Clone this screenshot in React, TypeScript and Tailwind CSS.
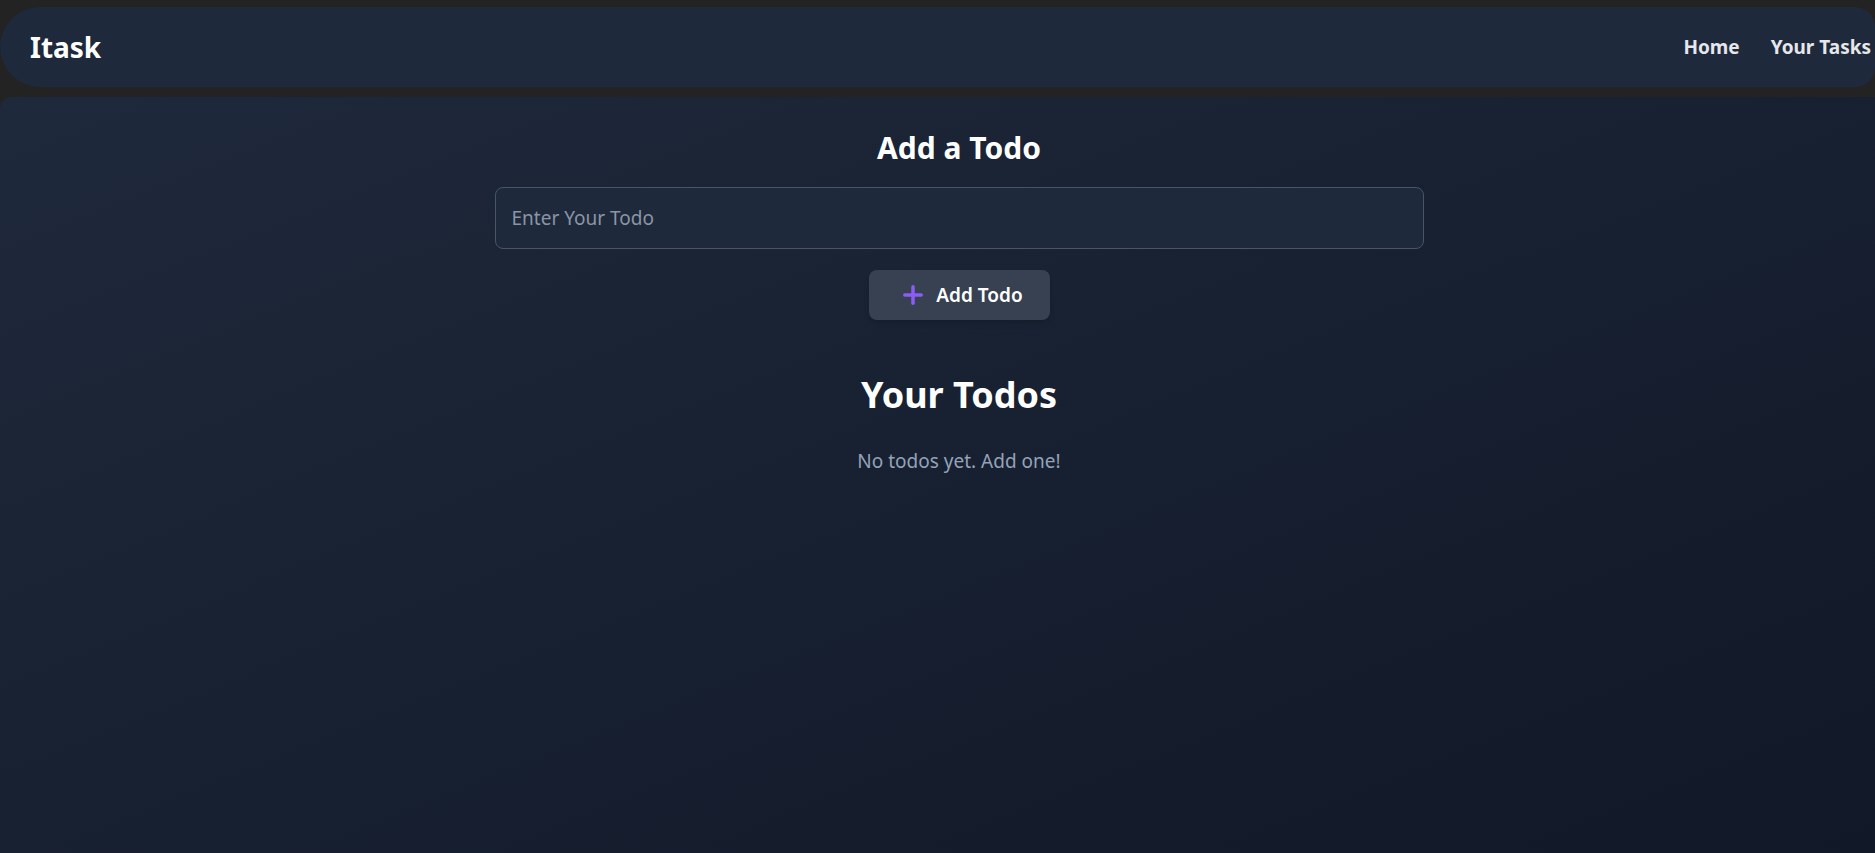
import React from "react";
import { Plus } from "lucide-react";

export default function App() {
  return (
    <div className="h-screen w-full overflow-hidden bg-[#232323] pt-[7px] flex flex-col font-['Noto_Sans',sans-serif]">
      <nav className="h-[80px] shrink-0 bg-[#1e293b] rounded-l-[40px] rounded-r-[20px] flex items-center justify-between pl-[30px] pr-[4px]">
        <span className="text-[28px] leading-[36px] font-bold text-white">Itask</span>
        <ul className="flex items-center gap-[31px] text-[19px] leading-[28px] font-bold text-[#e5e7eb]">
          <li className="cursor-pointer">Home</li>
          <li className="cursor-pointer">Your Tasks</li>
        </ul>
      </nav>
      <main className="mt-[10px] flex-1 rounded-tl-[12px] bg-gradient-to-br from-[#1e293b] to-[#111827]">
        <div className="flex flex-col items-center pl-[43px] pt-[33px]">
          <h2 className="text-[30px] leading-[36px] font-bold text-white">Add a Todo</h2>
          <input
            type="text"
            placeholder="Enter Your Todo"
            className="mt-[21px] h-[62px] w-[929px] rounded-[8px] border border-[#475569] bg-[#1e293b] px-[16px] text-[19px] text-white placeholder:text-[#8b95a5] outline-none"
          />
          <button className="mt-[21px] h-[50px] w-[181px] rounded-[8px] bg-[#374151] shadow-md flex items-center justify-center gap-[9px] pl-[4px] text-[19px] font-semibold text-white">
            <Plus size={28} strokeWidth={3} className="text-[#8b5cf6]" />
            <span>Add Todo</span>
          </button>
          <h1 className="mt-[55px] text-[36px] leading-[40px] font-bold text-white">Your Todos</h1>
          <p className="mt-[32px] text-[19px] leading-[28px] text-[#94a3b8]">No todos yet. Add one!</p>
        </div>
      </main>
    </div>
  );
}
